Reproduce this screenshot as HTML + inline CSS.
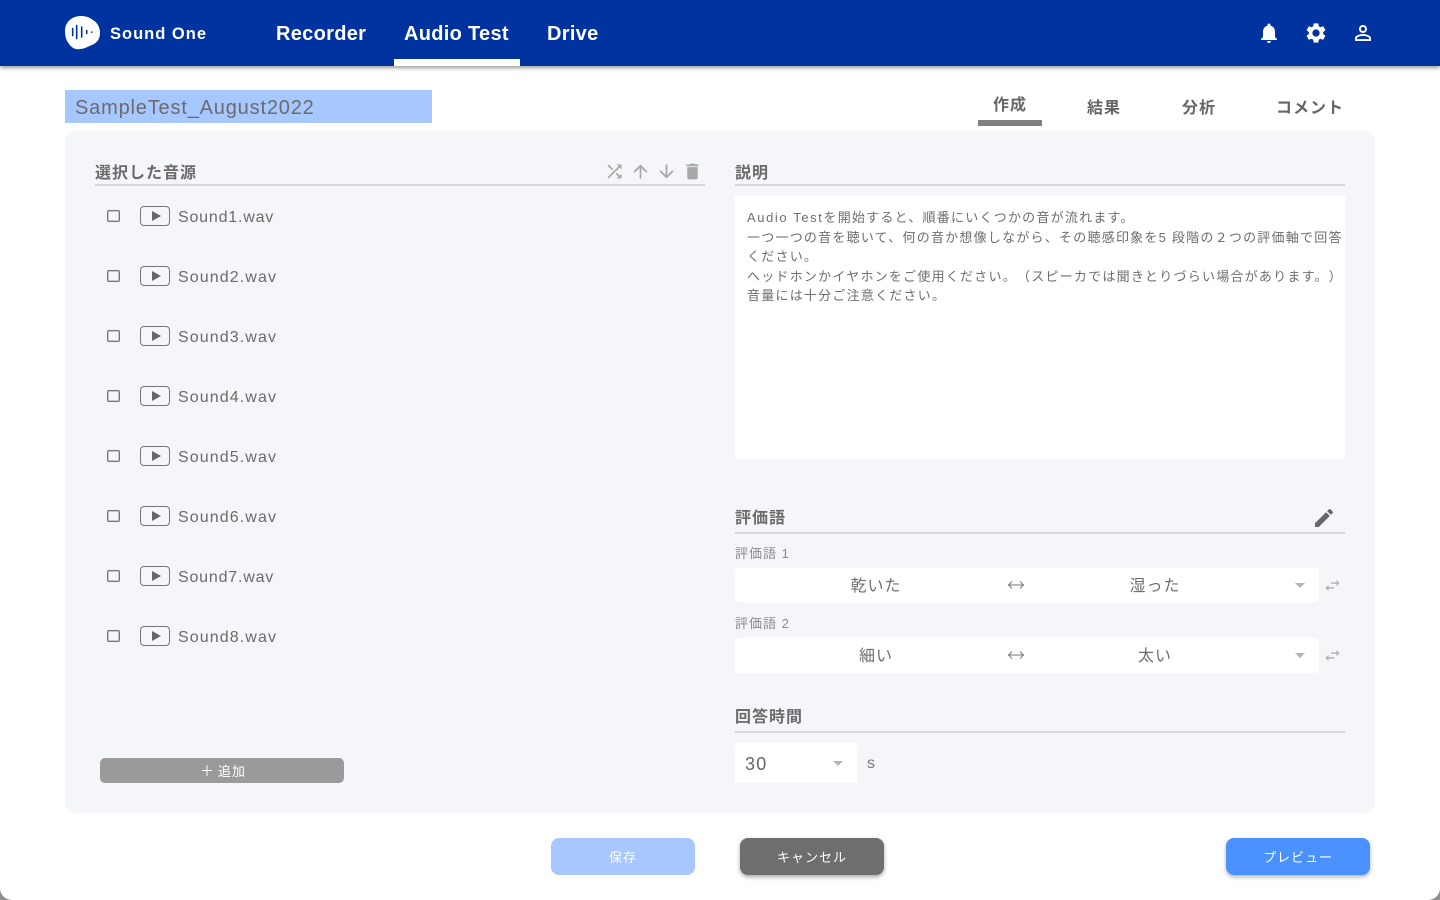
<!DOCTYPE html>
<html lang="ja">
<head>
<meta charset="utf-8">
<title>Sound One</title>
<style>
html,body{margin:0;padding:0;width:1440px;height:900px;overflow:hidden;background:#8f8f8f}
body{position:relative;font-family:"Liberation Sans","Noto Sans CJK JP",sans-serif;color:#6b6b6b;text-spacing-trim:space-all}
#win{position:absolute;left:0;top:0;width:1440px;height:900px;background:#fff;border-radius:0 0 12px 12px;overflow:hidden}
.a,.t,svg{position:absolute}
.t{white-space:nowrap;line-height:20px}
.nav{font-size:20px;font-weight:bold;color:#fff;letter-spacing:.3px;top:24px}
.tab{font-size:16px;font-weight:bold;color:#666;letter-spacing:1px}
.h{font-size:16px;font-weight:bold;color:#6b6b6b;letter-spacing:1px}
.rule{position:absolute;height:2px;background:#d6d8dd}
.cb{position:absolute;left:107px;width:11px;height:10px;border:1px solid #757575;border-radius:2px;box-shadow:inset 0 0 0 .5px #999}
.pl{position:absolute;left:140px;width:28px;height:18px;border:1px solid #757575;border-radius:4px}
.pl:after{content:"";position:absolute;left:11px;top:4px;border-left:9px solid #666;border-top:5px solid transparent;border-bottom:5px solid transparent}
.nm{font-size:16px;letter-spacing:1.1px;left:178px;color:#6b6b6b}
.nm.n1{letter-spacing:.8px}
.d{font-size:13px;letter-spacing:1.23px;left:747px;color:#6e6e6e}
.d b{font-weight:normal;letter-spacing:1.6px}
.lb{font-size:13px;letter-spacing:1px;left:735px;color:#8a8a8a}
.sel{position:absolute;background:#fff;border-radius:4px}
.w{font-size:16px;letter-spacing:1px;color:#6e6e6e;text-align:center;width:120px}
.car{position:absolute;border-top:5px solid #b5b5b5;border-left:5px solid transparent;border-right:5px solid transparent}
.btn{position:absolute;border-radius:8px;color:#fff;text-align:center;font-size:13px;letter-spacing:1px;width:144px;height:37px;line-height:39px;top:838px}
</style>
</head>
<body>
<div id="win">
  <div class="a" style="left:0;top:0;width:1440px;height:66px;background:#0033a0;box-shadow:0 2px 4px rgba(0,0,0,.4)"></div>

  <svg style="left:65px;top:16px" width="36" height="34" viewBox="0 0 36 34">
    <path fill="#fff" d="M0 15C0 6 7 0 16 0c4 0 8 1 12 4 5 3 7 8 7 13 0 6-3 10-8 12-5 2-8 4-12 4-4 1-8-1-11-5C1 24 0 20 0 15z"/>
    <g stroke="#0033a0" stroke-width="1.6" stroke-linecap="round">
      <path d="M7.7 12.5v7M11.7 9.5v13M16.7 11v10M21.7 14.5v3M26.7 16v.3"/>
    </g>
  </svg>
  <div class="t" style="left:110px;top:24px;font-size:16.5px;font-weight:bold;color:#fff;letter-spacing:1px">Sound One</div>
  <div class="t nav" style="left:276px">Recorder</div>
  <div class="t nav" style="left:404px">Audio Test</div>
  <div class="t nav" style="left:547px">Drive</div>
  <div class="a" style="left:394px;top:59px;width:126px;height:7px;background:#fff"></div>

  <svg style="left:1257px;top:21px" width="24" height="24" viewBox="0 0 24 24"><path fill="#fff" d="M12 22c1.1 0 2-.9 2-2h-4c0 1.1.89 2 2 2zm6-6v-5c0-3.07-1.64-5.64-4.5-6.32V4c0-.83-.67-1.5-1.5-1.5s-1.5.67-1.5 1.5v.68C7.63 5.36 6 7.92 6 11v5l-2 2v1h16v-1l-2-2z"/></svg>
  <svg style="left:1304px;top:21px" width="24" height="24" viewBox="0 0 24 24"><path fill="#fff" d="M19.14 12.94c.04-.3.06-.61.06-.94 0-.32-.02-.64-.07-.94l2.03-1.58c.18-.14.23-.41.12-.61l-1.92-3.32c-.12-.22-.37-.29-.59-.22l-2.39.96c-.5-.38-1.03-.7-1.62-.94l-.36-2.54c-.04-.24-.24-.41-.48-.41h-3.84c-.24 0-.43.17-.47.41l-.36 2.54c-.59.24-1.13.57-1.62.94l-2.39-.96c-.22-.08-.47 0-.59.22L2.74 8.87c-.12.21-.08.47.12.61l2.03 1.58c-.05.3-.09.63-.09.94s.02.64.07.94l-2.03 1.58c-.18.14-.23.41-.12.61l1.92 3.32c.12.22.37.29.59.22l2.39-.96c.5.38 1.03.7 1.62.94l.36 2.54c.05.24.24.41.48.41h3.84c.24 0 .44-.17.47-.41l.36-2.54c.59-.24 1.13-.56 1.62-.94l2.39.96c.22.08.47 0 .59-.22l1.92-3.32c.12-.22.07-.47-.12-.61l-2.01-1.58zM12 15.6c-1.98 0-3.6-1.62-3.6-3.6s1.62-3.6 3.6-3.6 3.6 1.62 3.6 3.6-1.62 3.6-3.6 3.6z"/></svg>
  <svg style="left:1351px;top:21px" width="24" height="24" viewBox="0 0 24 24"><path fill="#fff" d="M12 5.9c1.16 0 2.1.94 2.1 2.1s-.94 2.1-2.1 2.1S9.9 9.16 9.9 8s.94-2.1 2.1-2.1m0 9c2.97 0 6.1 1.46 6.1 2.1v1.1H5.9V17c0-.64 3.13-2.1 6.1-2.1M12 4C9.79 4 8 5.79 8 8s1.79 4 4 4 4-1.79 4-4-1.79-4-4-4zm0 9c-2.67 0-8 1.34-8 4v3h16v-3c0-2.66-5.33-4-8-4z"/></svg>

  <div class="a" style="left:65px;top:90px;width:367px;height:33px;background:#a6c8ff"></div>
  <div class="t" style="left:75px;top:98px;font-size:20px;letter-spacing:.82px;color:#6b6b6b">SampleTest_August2022</div>

  <div class="t tab" style="left:993px;top:96px">作成</div>
  <div class="a" style="left:978px;top:120px;width:64px;height:6px;background:#808080"></div>
  <div class="t tab" style="left:1087px;top:99px">結果</div>
  <div class="t tab" style="left:1182px;top:99px">分析</div>
  <div class="t tab" style="left:1276px;top:99px">コメント</div>

  <div class="a" style="left:65px;top:131px;width:1310px;height:682px;background:#f5f6fa;border-radius:10px"></div>

  <div class="t h" style="left:95px;top:164px">選択した音源</div>
  <div class="rule" style="left:95px;top:184px;width:610px"></div>
  <svg style="left:603.5px;top:160.5px" width="21" height="21" viewBox="0 0 24 24"><path fill="#a8a8a8" d="M10.59 9.17L5.41 4 4 5.41l5.17 5.17 1.42-1.41zM14.5 4l2.04 2.04L4 18.59 5.41 20 17.96 7.46 20 9.5V4h-5.5zm.33 9.41l-1.41 1.41 3.13 3.13L14.5 20H20v-5.5l-2.04 2.04-3.13-3.13z"/></svg>
  <svg style="left:629.5px;top:160.5px" width="21" height="21" viewBox="0 0 24 24"><path fill="#a8a8a8" d="M4 12l1.41 1.41L11 7.83V20h2V7.83l5.58 5.59L20 12l-8-8-8 8z"/></svg>
  <svg style="left:655.5px;top:160.5px" width="21" height="21" viewBox="0 0 24 24"><path fill="#a8a8a8" d="M20 12l-1.41-1.41L13 16.17V4h-2v12.17l-5.58-5.59L4 12l8 8 8-8z"/></svg>
  <svg style="left:681.5px;top:160.5px" width="21" height="21" viewBox="0 0 24 24"><path fill="#a8a8a8" d="M6 19c0 1.1.9 2 2 2h8c1.1 0 2-.9 2-2V7H6v12zM19 4h-3.5l-1-1h-5l-1 1H5v2h14V4z"/></svg>

  <div class="cb" style="top:210px"></div><div class="pl" style="top:206px"></div><div class="t nm n1" style="top:208px">Sound1.wav</div>
  <div class="cb" style="top:270px"></div><div class="pl" style="top:266px"></div><div class="t nm" style="top:268px">Sound2.wav</div>
  <div class="cb" style="top:330px"></div><div class="pl" style="top:326px"></div><div class="t nm" style="top:328px">Sound3.wav</div>
  <div class="cb" style="top:390px"></div><div class="pl" style="top:386px"></div><div class="t nm" style="top:388px">Sound4.wav</div>
  <div class="cb" style="top:450px"></div><div class="pl" style="top:446px"></div><div class="t nm" style="top:448px">Sound5.wav</div>
  <div class="cb" style="top:510px"></div><div class="pl" style="top:506px"></div><div class="t nm" style="top:508px">Sound6.wav</div>
  <div class="cb" style="top:570px"></div><div class="pl" style="top:566px"></div><div class="t nm n1" style="top:568px">Sound7.wav</div>
  <div class="cb" style="top:630px"></div><div class="pl" style="top:626px"></div><div class="t nm" style="top:628px">Sound8.wav</div>

  <div class="a" style="left:100px;top:758px;width:244px;height:25px;background:#9a9a9a;border-radius:5px"></div>
  <div class="t" style="left:200px;top:761px;font-size:14px;color:#fff">＋</div>
  <div class="t" style="left:218px;top:762px;font-size:13px;letter-spacing:1px;color:#fff">追加</div>

  <div class="t h" style="left:735px;top:164px">説明</div>
  <div class="rule" style="left:735px;top:184px;width:610px"></div>
  <div class="a" style="left:735px;top:196px;width:610px;height:262px;background:#fff"></div>
  <div class="t d" style="top:208px"><b>Audio Test</b>を開始すると、順番にいくつかの音が流れます。</div>
  <div class="t d" style="top:228px">一つ一つの音を聴いて、何の音か想像しながら、その聴感印象を5 段階の２つの評価軸で回答</div>
  <div class="t d" style="top:247px">ください。</div>
  <div class="t d" style="top:267px">ヘッドホンかイヤホンをご使用ください。（スピーカでは聞きとりづらい場合があります。）</div>
  <div class="t d" style="top:286px">音量には十分ご注意ください。</div>

  <div class="t h" style="left:735px;top:509px">評価語</div>
  <div class="rule" style="left:735px;top:532px;width:610px"></div>
  <svg style="left:1312px;top:506px" width="24" height="24" viewBox="0 0 24 24"><path fill="#666" d="M3 17.25V21h3.75L17.81 9.94l-3.75-3.75L3 17.25zM20.71 7.04c.39-.39.39-1.02 0-1.41l-2.34-2.34c-.39-.39-1.02-.39-1.41 0l-1.83 1.83 3.75 3.75 1.83-1.83z"/></svg>

  <div class="t lb" style="top:544px">評価語 1</div>
  <div class="sel" style="left:735px;top:568px;width:584px;height:34px"></div>
  <div class="t w" style="left:816px;top:577px">乾いた</div>
  <svg style="left:1007px;top:580px" width="18" height="10" viewBox="0 0 18 10"><path fill="none" stroke="#777" stroke-width="1" d="M1.5 5h15M5 1.5L1.5 5 5 8.5M13 1.5L16.5 5 13 8.5"/></svg>
  <div class="t w" style="left:1095px;top:577px">湿った</div>
  <div class="car" style="left:1295px;top:583px"></div>
  <svg style="left:1322.5px;top:575.5px" width="19" height="19" viewBox="0 0 24 24"><path fill="#b5b5b5" d="M6.99 11L3 15l3.99 4v-3H14v-2H6.99v-3zM21 9l-3.99-4v3H10v2h7.01v3L21 9z"/></svg>

  <div class="t lb" style="top:614px">評価語 2</div>
  <div class="sel" style="left:735px;top:638px;width:584px;height:35px"></div>
  <div class="t w" style="left:816px;top:647px">細い</div>
  <svg style="left:1007px;top:650px" width="18" height="10" viewBox="0 0 18 10"><path fill="none" stroke="#777" stroke-width="1" d="M1.5 5h15M5 1.5L1.5 5 5 8.5M13 1.5L16.5 5 13 8.5"/></svg>
  <div class="t w" style="left:1095px;top:647px">太い</div>
  <div class="car" style="left:1295px;top:653px"></div>
  <svg style="left:1322.5px;top:645.5px" width="19" height="19" viewBox="0 0 24 24"><path fill="#b5b5b5" d="M6.99 11L3 15l3.99 4v-3H14v-2H6.99v-3zM21 9l-3.99-4v3H10v2h7.01v3L21 9z"/></svg>

  <div class="t h" style="left:735px;top:708px">回答時間</div>
  <div class="rule" style="left:735px;top:731px;width:610px"></div>
  <div class="sel" style="left:735px;top:743px;width:122px;height:40px;border-radius:2px"></div>
  <div class="t" style="left:745px;top:754px;font-size:18px;letter-spacing:1.2px;color:#666">30</div>
  <div class="car" style="left:833px;top:761px"></div>
  <div class="t" style="left:867px;top:754px;font-size:16px;color:#777">s</div>

  <div class="btn" style="left:551px;background:#a6c8ff">保存</div>
  <div class="btn" style="left:740px;background:#6e6e6e;box-shadow:0 2px 4px rgba(0,0,0,.35)">キャンセル</div>
  <div class="btn" style="left:1226px;background:#4a90ff;box-shadow:0 2px 4px rgba(0,0,0,.3)">プレビュー</div>
</div>
</body>
</html>
